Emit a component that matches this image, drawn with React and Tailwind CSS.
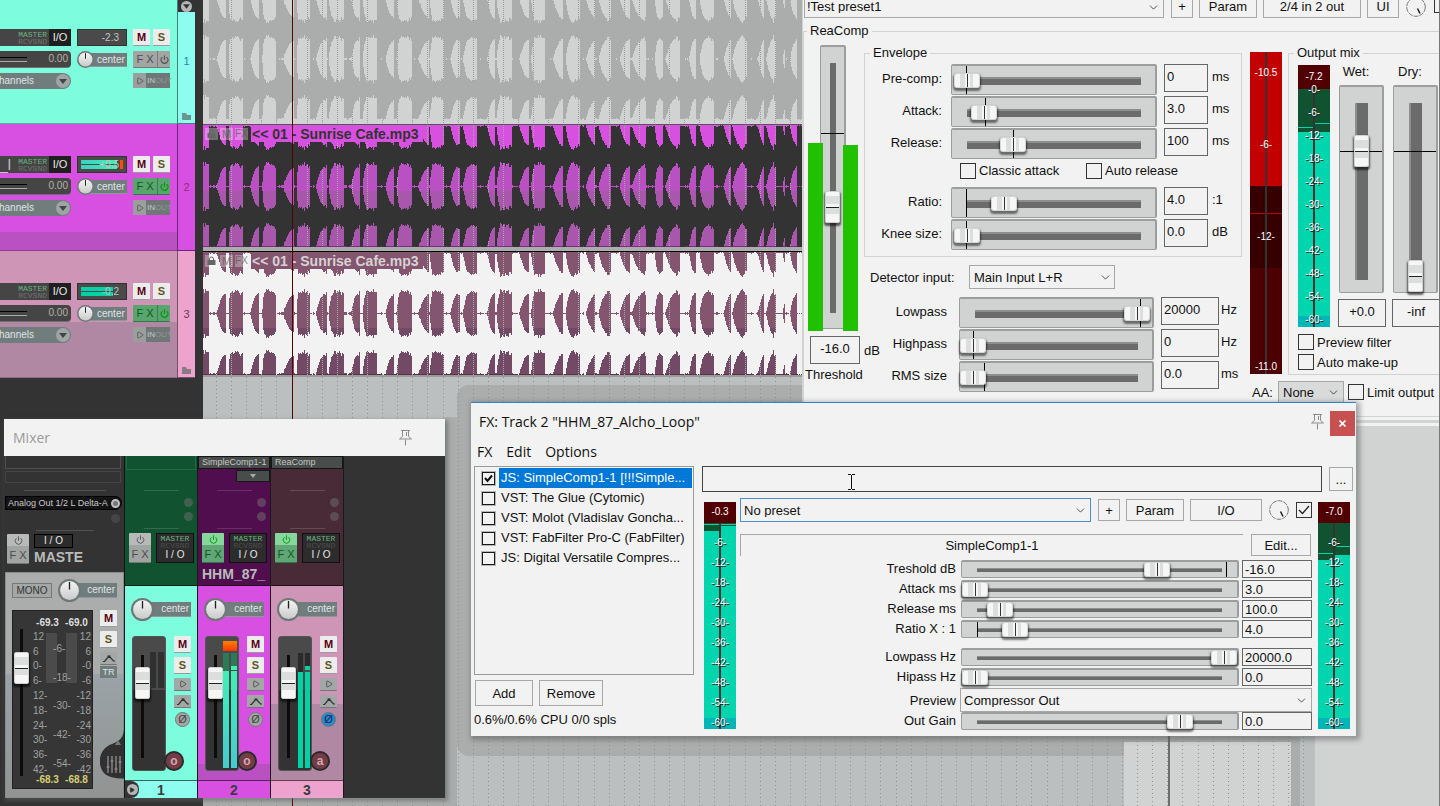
import React from "react";
import { Power, Play, ChevronDown } from "lucide-react";

/* ---------- shared control styles ---------- */

const H_RANGE =
  "relative z-10 m-0 block h-full w-full cursor-pointer appearance-none bg-transparent outline-none [&::-webkit-slider-thumb]:appearance-none [&::-webkit-slider-thumb]:h-[15px] [&::-webkit-slider-thumb]:w-[26px] [&::-webkit-slider-thumb]:rounded-[3px] [&::-webkit-slider-thumb]:border [&::-webkit-slider-thumb]:border-[#d4d6d5] [&::-webkit-slider-thumb]:shadow-[0_2px_2px_1px_rgba(0,0,0,0.5)] [&::-webkit-slider-thumb]:bg-[linear-gradient(90deg,#f6f6f6_5px,#dcdedd_5px,#dcdedd_10px,#f6f6f6_10px,#f6f6f6_12px,#333_12px,#333_13px,#f6f6f6_13px,#f6f6f6_15px,#dcdedd_15px,#dcdedd_18px,#f6f6f6_18px)]";

const V_RANGE =
  "relative z-10 m-0 block h-full w-4 cursor-pointer appearance-none bg-transparent outline-none [writing-mode:vertical-lr] [direction:rtl] [&::-webkit-slider-thumb]:appearance-none [&::-webkit-slider-thumb]:h-[32px] [&::-webkit-slider-thumb]:w-[15px] [&::-webkit-slider-thumb]:rounded-[2px] [&::-webkit-slider-thumb]:border [&::-webkit-slider-thumb]:border-[#d0d2d1] [&::-webkit-slider-thumb]:shadow-[0_2px_2px_1px_rgba(0,0,0,0.6)] [&::-webkit-slider-thumb]:bg-[linear-gradient(180deg,#f6f6f6_4px,#dcdedd_4px,#dcdedd_12px,#f6f6f6_12px,#f6f6f6_15px,#222_15px,#222_16px,#dcdedd_16px,#dcdedd_22px,#f6f6f6_22px)]";

const BTN =
  "flex items-center justify-center border border-[#a6a8a7] bg-[#f2f2f2] text-[#111]";

const CHECK =
  "m-0 h-4 w-4 shrink-0 appearance-none border border-[#333] bg-[#f2f2f2]";

/* ---------- waveform data ---------- */

// [start, hold, decay] of every transient, in thirds of a pixel
const HITS = [
  [25, 25, 26], [78, 7, 4], [127, 23, 26], [177, 8, 8], [228, 20, 38],
  [280, 8, 6], [330, 16, 30], [380, 4, 16], [430, 22, 22], [480, 7, 10],
  [530, 25, 30], [580, 8, 10], [635, 20, 34], [685, 3, 8], [730, 20, 24],
  [780, 7, 20], [830, 30, 24], [885, 3, 12], [935, 22, 30], [985, 7, 10],
  [1033, 25, 30], [1087, 9, 14], [1138, 18, 34], [1185, 10, 26],
  [1233, 25, 30], [1288, 7, 34], [1338, 24, 14], [1388, 7, 32],
  [1440, 26, 18], [1488, 9, 20], [1540, 30, 26], [1592, 4, 22],
  [1640, 32, 24], [1690, 7, 22], [1728, 18, 24], [1755, 13, 24],
  [1790, 18, 22], [1838, 20, 30],
];

const WAVE_WIDTH = 620;

function amplitude(x) {
  const t = (x + 3) * 3;
  const noise = Math.abs(Math.sin(x * 12.9898) * 43758.5453) % 1;
  let a = 0.2 + noise * 0.12;
  HITS.forEach(([s, hold, decay], i) => {
    if (t >= s && t < s + hold) a = Math.max(a, 0.94 + noise * 0.05);
    else if (t >= s + hold && t < s + hold + decay) {
      const k = 1 - (t - s - hold) / decay;
      a = Math.max(a, 0.3 + 0.62 * k * k + noise * 0.06);
    }
    const next = HITS[i + 1];
    if (next && t > next[0] - 9 && t < next[0]) a = Math.max(a, 0.26 + noise * 0.14);
  });
  return a;
}

function wavePath(center, height) {
  let up = "";
  let down = "";
  for (let x = 0; x < WAVE_WIDTH; x++) {
    const h = amplitude(x) * height;
    up += `L${x} ${center - h}L${x + 1} ${center - h}`;
    const r = WAVE_WIDTH - 1 - x;
    const g = amplitude(r) * height;
    down += `L${r + 1} ${center + g}L${r} ${center + g}`;
  }
  return `M0 ${center}${up}${down}Z`;
}

const GRID = Array.from({ length: 80 }, (_, i) => Math.round(13 + i * 15.1));

function Waveform({ height, bands, centers, amp, color, grid }) {
  return (
    <svg width={WAVE_WIDTH} height={height} className="block" shapeRendering="crispEdges" aria-hidden="true">
      {bands.map(([y, h, fill]) => (
        <rect key={y} x="0" y={y} width={WAVE_WIDTH} height={h} fill={fill} />
      ))}
      {GRID.filter((x) => x < WAVE_WIDTH).map((x) => (
        <line key={x} x1={x + 0.5} x2={x + 0.5} y1="0" y2={height} stroke={grid} strokeDasharray="1 1" />
      ))}
      {centers.map((c) => (
        <path key={c} d={wavePath(c, amp)} fill={color} />
      ))}
    </svg>
  );
}

/* ---------- small drawings ---------- */

function Pin() {
  return (
    <svg width="15" height="17" viewBox="0 0 15 17" fill="none" stroke="#8b8d8c" aria-hidden="true">
      <path d="M3 1.5h9M4.5 2v5.500M10.500 2v5.500M8.500 3v4M4.500 7.500L1.500 10h12l-3-2.500M7.500 10.500v6" />
    </svg>
  );
}

function Knob({ size, id }) {
  return (
    <svg width={size} height={size} viewBox="0 0 24 24" className="relative z-10 shrink-0" aria-hidden="true">
      <defs>
        <linearGradient id={id} x1="0" y1="0" x2="0" y2="1">
          <stop offset="0" stopColor="#f4f4f4" />
          <stop offset="1" stopColor="#c9cbca" />
        </linearGradient>
      </defs>
      <circle cx="12" cy="12" r="12" fill="#6e7877" />
      <circle cx="12" cy="12" r="9.800" fill={`url(#${id})`} />
      <path d="M12 3v8" stroke="#222" strokeWidth="1.400" />
    </svg>
  );
}

function DryKnob() {
  return (
    <svg width="20" height="20" viewBox="0 0 20 20" fill="none" className="shrink-0" aria-hidden="true">
      <circle cx="10" cy="10" r="9.300" stroke="#777" strokeDasharray="5 1" />
      <path d="M11.500 11.500l2.500 5" stroke="#111" strokeWidth="1.400" />
    </svg>
  );
}

function Envelope() {
  return (
    <svg width="12" height="8" viewBox="0 0 12 8" fill="none" stroke="#333" aria-hidden="true">
      <path d="M0 7.500h1.500L6 2l4.500 5H12M4.500 2h3" strokeWidth="1.200" />
    </svg>
  );
}

/* ---------- track control panel ---------- */

function MuteSolo() {
  return (
    <>
      <button className="flex h-[17px] w-[17px] items-center justify-center rounded-[1px] border-b border-[#9a9c9b] bg-[#ececec] text-[11px] font-bold text-[#560010]">M</button>
      <button className="flex h-[17px] w-[17px] items-center justify-center rounded-[1px] border-b border-[#9a9c9b] bg-[#ececec] text-[11px] font-bold text-[#5d5620]">S</button>
    </>
  );
}

function TrackPanel({ color, lower, lowerFrom, number, stripe, level, fx, folder, fragment, first }) {
  return (
    <div className={`flex ${first ? "h-[124px]" : "h-[127px]"}`}>
      <div className={`relative flex w-[177px] gap-[6px] border-b border-black/30 ${first ? "pt-[29px]" : "pt-[32px]"} ${color}`}>
        <div className={`absolute inset-x-0 bottom-0 ${lower} ${lowerFrom}`} />
        <div className="relative flex w-[71px] flex-col gap-[5px] text-[11px]">
          <div className="flex h-[17px] items-center justify-end bg-[#454545] text-[#c8c8c8]">
            <span className="mr-auto text-[14px] leading-none">{fragment}</span>
            <span className="flex flex-col font-[Liberation_Mono,monospace] text-[8px] leading-[7px]">
              <span className="text-[#6fae84]">MASTER</span>
              <span className="text-[#6f7170]">RCVSND</span>
            </span>
            <button className="ml-[2px] h-full w-[22px] bg-[#1f1f1f] text-[11px] text-[#e8e8e8]">I/O</button>
          </div>
          <div className="flex h-[17px] items-center rounded-r-sm border-b border-[#8a8c8b]/60 bg-[#454545] pr-[3px]">
            <div className="h-[5px] w-[27px] border-y border-[#ababab] border-t-black" />
            <span className="ml-auto text-[10px] text-[#b9b0a8]">0.00</span>
          </div>
          <button className="flex h-4 items-center justify-between rounded-r-full bg-[#717d7d] pr-px text-[10px] text-[#dfe6e6]">
            <span className="-ml-[6px]">channels</span>
            <span className="flex h-[14px] w-[14px] items-center justify-center rounded-full bg-[#9ea5a4]">
              <svg width="8" height="5" viewBox="0 0 8 5" aria-hidden="true"><path d="M0 0h8L4 5z" fill="#444" /></svg>
            </span>
          </button>
        </div>
        <div className="relative flex w-[50px] flex-col gap-[5px]">
          <div className="relative flex h-[17px] items-center justify-end border border-[#333] bg-[#4a4a4a] pr-[7px] text-[10px] text-[#c4c4c4]">
            {level.bar && (
              <div className="absolute inset-y-[3px] left-[3px] flex flex-col gap-px">
                <div className={`h-[4px] ${level.bar}`} />
                <div className={`h-[4px] ${level.bar}`} />
              </div>
            )}
            {level.clip && <div className="absolute inset-y-[3px] right-[3px] w-[3px] bg-[#ff4a00]" />}
            <span className="relative">{level.text}</span>
          </div>
          <div className="flex h-[17px] items-center">
            <Knob size={17} id={`pan-tcp-${number}`} />
            <span className="-ml-1 h-[14px] flex-1 border-b border-[#8d9998] bg-[#717d7d] pl-[7px] text-[10px] leading-[13px] text-[#dfe6e6]">center</span>
          </div>
        </div>
        <div className="relative flex w-[37px] flex-col gap-[5px]">
          <div className="flex justify-between"><MuteSolo /></div>
          <button className={`flex h-[17px] items-center rounded-[1px] border-b text-[11px] ${fx ? "border-[#2c7a44] bg-[#58a56e] text-[#0a5c22]" : "border-[#777] bg-[#a2a5a4] text-[#4c4e4d]"}`}>
            <span className="w-6 text-center">F X</span>
            <span className="flex h-full flex-1 items-center justify-center border-l border-black/25">
              <Power size={9} strokeWidth={3} className={fx ? "text-[#0c9410]" : "text-[#555]"} />
            </span>
          </button>
          <div className="flex h-[15px] items-center bg-[#6f7877] text-[8px] text-[#c6c8c7]">
            <button aria-label="Monitor input" className="flex h-full w-[13px] shrink-0 items-center justify-center bg-[#9a9e9d] text-[#444]"><Play size={8} /></button>
            <span className="pl-px">IN</span><span className="text-[#909796]">OUT</span>
          </div>
        </div>
      </div>
      <div className={`relative flex w-[18px] items-center justify-center border-b border-l border-black/50 text-[11px] ${stripe}`}>
        {number}
        {folder && (
          <svg width="9" height="7" viewBox="0 0 9 7" className="absolute bottom-[3px] left-1" aria-hidden="true">
            <path d="M0 0h4l1 2h4v5H0z" fill="#5c6a68" fillOpacity="0.7" />
          </svg>
        )}
      </div>
    </div>
  );
}

function TrackList() {
  return (
    <aside className="w-[203px] shrink-0 bg-[#333]">
      <div className="relative">
        <TrackPanel first color="bg-[#7dfddd]" lower="bg-[#80ffda]" lowerFrom="h-0" number="1" stripe="bg-[#8cfdef] text-[#2f83a8]" level={{ text: "-2.3" }} folder />
        <div className="absolute top-0 left-[178px] flex h-3 w-[17px] items-center justify-center bg-[#333]">
          <span className="flex h-[11px] w-[11px] items-center justify-center rounded-full bg-[#b5b7b6]">
            <svg width="7" height="5" viewBox="0 0 8 5" aria-hidden="true"><path d="M0 0h8L4 5z" fill="#333" /></svg>
          </span>
        </div>
      </div>
      <TrackPanel color="bg-[#d750e1]" lower="bg-[#b951c3]" lowerFrom="h-[18px]" number="2" stripe="bg-[#d750e1] text-[#8c2f76]" level={{ text: "+0.5", bar: "w-[36px] bg-linear-to-r from-[#3fcfc4] to-[#3ff0b4]", clip: true }} fx fragment="_l" />
      <TrackPanel color="bg-[#ce95b7]" lower="bg-[#b088a3]" lowerFrom="h-[55px]" number="3" stripe="bg-[#eda3cd] text-[#5f3f52]" level={{ text: "-0.2", bar: "w-[32px] bg-[#00d2a8]" }} fx folder />
    </aside>
  );
}

/* ---------- arrange view ---------- */

function ItemHeader({ bg, text }) {
  return (
    <div className="absolute top-0 left-0 flex h-[17px] items-center gap-[2px] pl-[2px]">
      <span className="flex h-3 w-[13px] items-center justify-center bg-white/30">
        <svg width="9" height="9" viewBox="0 0 9 9" aria-hidden="true">
          <path d="M0.500 4h8v5h-8z" fill="#666" />
          <path d="M2.500 4V3a2 2 0 0 1 4 0V4" fill="none" stroke="#666" />
        </svg>
      </span>
      <span className="h-3 w-[13px] bg-white/30 text-center text-[11px] leading-3 text-[#555]/70">M</span>
      <span className="h-3 w-[13px] bg-white/30 text-center text-[10px] leading-3 text-[#555]/70">FX</span>
      <span className={`ml-px h-[17px] pr-1 pl-px text-[14px] leading-[18px] font-bold ${bg} ${text}`}>&lt;&lt; 01 - Sunrise Cafe.mp3</span>
    </div>
  );
}

function Arrange() {
  return (
    <main className="relative flex-1 overflow-hidden bg-[#bbbfc0]">
      <Waveform height={124} bands={[[0, 124, "#d1d3d2"]]} centers={[29, 89]} amp={31} color="#abadac" grid="#9a9c9b" />
      <div className="relative border-t border-[#555]">
        <Waveform height={122} bands={[[0, 40, "#d850e0"], [40, 26, "#b951c3"], [66, 55, "#a957ad"], [121, 1, "#7d2a86"]]} centers={[31, 92]} amp={31} color="#333333" grid="#a3aba0" />
        <ItemHeader bg="bg-[#d850e0]" text="text-[#333]" />
      </div>
      <div className="h-1 bg-[#abadac]" />
      <div className="relative border-t border-black">
        <Waveform height={123} bands={[[0, 76, "#84556e"], [76, 46, "#734a66"], [122, 1, "#5e2f45"]]} centers={[31, 92]} amp={31} color="#f2f2f2" grid="#a8aaa9" />
        <ItemHeader bg="bg-[#84556e]" text="text-[#d6d2d4]" />
      </div>
      <svg className="h-[440px] w-full border-t-2 border-[#9a9c9b]" aria-hidden="true">
        <rect x="254" y="8" width="834" height="371" rx="12" fill="#abadac" />
        <rect x="0" y="422" width="254" height="20" fill="#abadac" />
        <rect x="242" y="40" width="12" height="400" fill="#abadac" />
        <rect x="921" y="365" width="167" height="80" fill="#d1d3d2" />
        <rect x="1088" y="360" width="9" height="80" fill="#abadac" />
        {GRID.map((x) => (
          <line key={x} x1={x + 0.5} x2={x + 0.5} y1="0" y2="440" stroke="#8f9190" strokeDasharray="1 3" shapeRendering="crispEdges" />
        ))}
        <rect x="965" y="340" width="2" height="100" fill="#6c6e6d" />
      </svg>
      <div className="absolute inset-y-0 left-[89px] w-px bg-[#5a0000]" />
    </main>
  );
}

/* ---------- level meter with a dB scale ---------- */

const SCALE = ["-6-", "-12-", "-18-", "-24-", "-30-", "-36-", "-42-", "-48-", "-54-", "-60-"];

function ScaleMeter({ value, valueClass, scale, stepClass, padClass, left, right, leftPeak, rightPeak }) {
  return (
    <div className="flex w-8 flex-col text-center text-[10px] text-white">
      <div className={`bg-[#500000] ${valueClass}`}>{value}</div>
      <div className={`relative bg-[#115231] ${padClass}`}>
        <div className={`absolute bottom-0 left-0 w-4 bg-[#00d5ae] ${left}`} />
        <div className={`absolute right-0 bottom-0 w-4 bg-[#00d5ae] ${right}`} />
        <div className={`absolute left-0 h-px w-4 bg-[#00d5ae] ${leftPeak}`} />
        <div className={`absolute right-0 h-px w-4 bg-[#00d5ae] ${rightPeak}`} />
        <div className="absolute inset-x-0 bottom-0 h-[11px] bg-[#00b6b6]" />
        <div className="absolute inset-y-0 left-[15px] w-[2px] bg-[#333]" />
        <ul className="relative [text-shadow:1px_1px_0_#222]">
          {scale.map((s) => (
            <li key={s} className={stepClass}>{s}</li>
          ))}
        </ul>
      </div>
    </div>
  );
}

/* ---------- ReaComp window ---------- */

const TRACK_BOX = "relative rounded-[2px] border border-t-2 border-r-2 border-[#9c9e9d] bg-[#d1d3d2]";

function CompRow({ id, label, value, tick, text, unit, wide }) {
  return (
    <div className="flex h-8">
      <label htmlFor={id} className={`text-right leading-[30px] ${wide ? "w-[83px]" : "w-[77px]"}`}>{label}</label>
      <div className={`${TRACK_BOX} h-[31px] ${wide ? "ml-[12px] w-[195px]" : "ml-[9px] w-[206px]"}`}>
        <div className="absolute top-[11px] right-[14px] left-[15px] h-2 border-t-2 border-[#8d8f8e] bg-[#6b6b6b]" />
        <div className={`absolute inset-y-0 w-px bg-black ${tick}`} />
        <input id={id} type="range" min="0" max="100" defaultValue={value} className={H_RANGE} />
      </div>
      <input type="text" aria-label={`${label} value`} defaultValue={text} className={`ml-[7px] h-7 border border-[#666] bg-[#f2f2f2] px-[2px] pb-1 text-[13px] ${wide ? "w-[58px]" : "w-[44px]"}`} />
      <span className={`leading-[26px] ${wide ? "ml-[2px]" : "ml-1"}`}>{unit}</span>
    </div>
  );
}

function MixFader({ id, label, value, text }) {
  return (
    <div className="flex w-[48px] shrink-0 flex-col">
      <label htmlFor={id} className="h-[22px] pr-3 text-center leading-[18px]">{label}</label>
      <div className={`${TRACK_BOX} ml-px flex h-[208px] w-[45px] justify-center`}>
        <div className="absolute top-4 bottom-3 left-[15px] w-[13px] bg-[#6b6b6b] shadow-[inset_2px_0_0_#8d8f8e]" />
        <div className="absolute inset-x-0 top-[64px] h-px bg-black" />
        <input id={id} type="range" min="0" max="100" defaultValue={value} className={V_RANGE} />
      </div>
      <input type="text" aria-label={`${label} dB`} defaultValue={text} className="mt-[6px] h-7 w-[48px] border border-[#666] bg-[#f2f2f2] pb-1 text-center text-[13px]" />
    </div>
  );
}

function ReaCompWindow() {
  return (
    <section className="absolute top-0 right-0 left-[802px] h-[426px] overflow-hidden border-r border-l border-r-[#777] border-l-[#d1d3d2] bg-[#f2f2f2] text-[13px] text-[#111]">
      <div className="-mt-[5px] flex h-[23px] items-stretch pl-px">
        <div className="relative w-[360px] shrink-0">
          <select aria-label="Preset" className="h-full w-full appearance-none border border-[#a6a8a7] bg-[#f2f2f2] px-[2px]">
            <option>!Test preset1</option>
          </select>
          <ChevronDown size={13} strokeWidth={1.300} className="absolute top-[6px] right-1" />
        </div>
        <button className={`${BTN} ml-[7px] w-[22px] shrink-0`}>+</button>
        <button className={`${BTN} ml-[6px] w-[58px] shrink-0`}>Param</button>
        <button className={`${BTN} ml-[6px] w-[98px] shrink-0`}>2/4 in 2 out</button>
        <button className={`${BTN} ml-[6px] w-[32px] shrink-0`}>UI</button>
        <span className="ml-[7px] flex shrink-0 items-center"><DryKnob /></span>
        <input type="checkbox" aria-label="Enabled" defaultChecked className={`${CHECK} mt-[2px] ml-[8px]`} />
      </div>
      <fieldset className="mt-[3px] min-w-0 border-t border-l border-[#d1d3d2]">
        <legend className="ml-[3px] px-[3px] leading-[20px]">ReaComp</legend>
        <div className="flex w-[680px] items-start">
          <div className="w-[60px] pt-[2px]">
            <div className="ml-1 flex h-[288px] w-[50px] items-end">
              <div className="z-20 mr-[-3px] h-[188px] w-[15px] bg-[#21c100]" />
              <div className={`${TRACK_BOX} mb-[2px] flex h-[284px] w-[26px] justify-center`}>
                <div className="absolute top-4 bottom-[15px] left-[9px] w-[6px] bg-[#6b6b6b]" />
                <div className="absolute inset-x-0 top-[86px] h-px bg-black" />
                <input type="range" aria-label="Threshold" min="0" max="100" defaultValue="42" className={V_RANGE} />
              </div>
              <div className="z-20 ml-[-3px] h-[186px] w-[15px] bg-[#21c100]" />
            </div>
            <div className="mt-[5px] flex items-end">
              <input id="thr" type="text" defaultValue="-16.0" className="ml-[6px] h-7 w-[50px] shrink-0 border border-[#666] bg-[#f2f2f2] pb-1 text-center" />
              <span className="ml-1 leading-[26px]">dB</span>
            </div>
            <label htmlFor="thr" className="ml-px leading-[22px]">Threshold</label>
          </div>
          <div className="w-[380px]">
            <fieldset className="mt-[2px] w-[378px] border border-[#d1d3d2] pt-px pb-[5px]">
              <legend className="ml-[5px] px-[3px] leading-[20px]">Envelope</legend>
              <CompRow id="pre" label="Pre-comp:" value="1" tick="left-[14px]" text="0" unit="ms" />
              <CompRow id="att" label="Attack:" value="11" tick="left-[33px]" text="3.0" unit="ms" />
              <CompRow id="rel" label="Release:" value="27" tick="left-[61px]" text="100" unit="ms" />
              <div className="flex h-[27px] items-center pb-[6px] pl-[95px]">
                <label className="flex w-[126px] items-center gap-[3px]"><input type="checkbox" className={CHECK} />Classic attack</label>
                <label className="flex items-center gap-[3px]"><input type="checkbox" className={CHECK} />Auto release</label>
              </div>
              <CompRow id="rat" label="Ratio:" value="22" tick="left-[14px]" text="4.0" unit=":1" />
              <CompRow id="kne" label="Knee size:" value="1" tick="left-[14px]" text="0.0" unit="dB" />
            </fieldset>
            <div className="flex h-[40px] items-center pl-[6px]">
              <label htmlFor="det" className="w-[99px]">Detector input:</label>
              <div className="relative h-[24px] w-[146px]">
                <select id="det" className="h-full w-full appearance-none border border-[#a6a8a7] bg-[#f2f2f2] px-1"><option>Main Input L+R</option></select>
                <ChevronDown size={13} strokeWidth={1.300} className="absolute top-[6px] right-[3px]" />
              </div>
            </div>
            <CompRow wide id="low" label="Lowpass" value="99" tick="left-[180px]" text="20000" unit="Hz" />
            <CompRow wide id="hig" label="Highpass" value="0" tick="left-[13px]" text="0" unit="Hz" />
            <CompRow wide id="rms" label="RMS size" value="0" tick="left-[24px]" text="0.0" unit="ms" />
          </div>
          <div>
            <div className="flex">
              <div className="relative mt-[11px] ml-2 flex h-[322px] w-8 flex-col items-center bg-[#4c0000] text-[10px] leading-[14px] text-white">
                <div className="absolute inset-x-0 top-0 h-[134px] bg-[#c20000]" />
                <div className="absolute inset-x-0 top-[134px] h-[82px] bg-[#360000]" />
                <div className="absolute inset-x-0 top-[161px] h-px bg-[#c20000]" />
                <div className="absolute inset-y-0 left-[15px] w-[2px] bg-[#333]" />
                <span className="relative mt-[14px]">-10.5</span>
                <span className="relative mt-[58px]">-6-</span>
                <span className="relative mt-[78px]">-12-</span>
                <span className="relative mt-auto">-11.0</span>
              </div>
              <fieldset className="mt-[2px] ml-[6px] w-[200px] border border-[#d1d3d2]">
                <legend className="ml-[5px] px-[3px] leading-[20px]">Output mix</legend>
                <div className="flex h-[265px] pl-[9px]">
                  <div className="pt-[2px]">
                    <ScaleMeter value="-7.2" valueClass="h-[24px] leading-[23px]" scale={["-0-", ...SCALE]} stepClass="h-[23px] leading-[1px]" padClass="h-[238px]" left="h-[195px]" right="h-[195px]" leftPeak="top-[38px]" rightPeak="top-[34px]" />
                  </div>
                  <div className="ml-2 flex gap-[6px]">
                    <MixFader id="wet" label="Wet:" value="72" text="+0.0" />
                    <MixFader id="dry" label="Dry:" value="0" text="-inf" />
                  </div>
                </div>
                <label className="mt-1 ml-[9px] flex h-5 items-center gap-[3px]"><input type="checkbox" className={CHECK} />Preview filter</label>
                <label className="mb-[2px] ml-[9px] flex h-5 items-center gap-[3px]"><input type="checkbox" className={CHECK} />Auto make-up</label>
              </fieldset>
            </div>
            <div className="mt-[6px] ml-[10px] flex h-[22px] items-center">
              <label htmlFor="aa" className="w-[26px]">AA:</label>
              <div className="relative h-[22px] w-[66px]">
                <select id="aa" className="h-full w-full appearance-none border border-[#a6a8a7] bg-[#d9dbda] px-1"><option>None</option></select>
                <ChevronDown size={13} strokeWidth={1.300} className="absolute top-[5px] right-1" />
              </div>
              <label className="ml-1 flex items-center gap-[3px]"><input type="checkbox" className={CHECK} />Limit output</label>
            </div>
          </div>
        </div>
      </fieldset>
      <div className="absolute inset-x-0 top-[416px] h-px bg-[#d1d3d2]" />
      <div className="absolute inset-x-0 top-[420px] h-[3px] bg-[#d1d3d2]" />
    </section>
  );
}

/* ---------- FX window ---------- */

function FxRow({ id, label, value, text, tick }) {
  return (
    <div className="flex h-5 items-start">
      <label htmlFor={id} className="w-[216px] text-right leading-[18px]">{label}</label>
      <div className={`${TRACK_BOX} ml-[5px] h-[18px] min-w-0 flex-1`}>
        <div className="absolute top-[6px] right-[15px] left-[15px] h-[4px] border-t border-[#8d8f8e] bg-[#6b6b6b]" />
        {tick && <div className={`absolute inset-y-0 w-px bg-black ${tick}`} />}
        <input id={id} type="range" min="0" max="100" step="0.5" defaultValue={value} className={H_RANGE} />
      </div>
      <input type="text" aria-label={`${label} value`} defaultValue={text} className="ml-[3px] h-[18px] w-[70px] border border-[#666] bg-[#f2f2f2] px-[2px]" />
    </div>
  );
}

const PLUGINS = [
  "JS: SimpleComp1-1 [!!!Simple...",
  "VST: The Glue (Cytomic)",
  "VST: Molot (Vladislav Goncha...",
  "VST: FabFilter Pro-C (FabFilter)",
  "JS: Digital Versatile Compres...",
];

function FxCheck({ checked }) {
  return (
    <span className="relative flex h-[13px] w-[13px] shrink-0">
      <input type="checkbox" aria-label="Enable plug-in" defaultChecked={checked} className="m-0 h-[13px] w-[13px] appearance-none border border-[#1a1a1a] bg-[#f2f2f2] outline outline-[#b5b7b6]" />
      {checked && (
        <svg width="13" height="13" viewBox="0 0 13 13" fill="none" className="absolute top-0 left-0" aria-hidden="true">
          <path d="M3 6l2.500 3L10 3.500" stroke="#111" strokeWidth="2" />
        </svg>
      )}
    </span>
  );
}

function FxWindow() {
  return (
    <section className="absolute top-[402px] left-[471px] w-[885px] border-t border-[#2a86c8] bg-[#f2f2f2] text-[13px] text-[#111] shadow-[2px_2px_5px_2px_rgba(70,75,75,0.45)]">
      <header className="flex h-[37px] items-center pl-2 font-['Open_Sans','Noto_Sans',sans-serif] text-[14px]">
        <h2 className="flex-1">FX: Track 2 "HHM_87_Alcho_Loop"</h2>
        <Pin />
        <button aria-label="Close" className="mt-1 mr-px ml-[5px] flex h-[25px] w-[25px] items-center justify-center bg-[#c75050]">
          <svg width="7" height="7" viewBox="0 0 7 7" stroke="#fff" strokeWidth="1.600" aria-hidden="true"><path d="M0.500 0.500l6 6M6.500 0.500l-6 6" /></svg>
        </button>
      </header>
      <nav className="flex h-[24px] items-center gap-[14px] pl-[6px] font-['Open_Sans','Noto_Sans',sans-serif] text-[14px]">
        <button>FX</button><button>Edit</button><button>Options</button>
      </nav>
      <div className="flex pt-[2px] pb-1">
        <div className="w-[220px] shrink-0 pl-[3px]">
          <ul className="h-[209px] w-[220px] border border-[#999b9a] pt-px">
            {PLUGINS.map((p, i) => (
              <li key={p} className="flex h-5 items-center gap-1 pl-[7px]">
                <FxCheck checked={i === 0} />
                <span className={`mr-px h-5 flex-1 overflow-hidden pl-[2px] leading-5 whitespace-nowrap ${i === 0 ? "bg-[#0078d7] text-white" : ""}`}>{p}</span>
              </li>
            ))}
          </ul>
          <div className="mt-[5px] ml-px flex gap-[6px]">
            <button className={`${BTN} h-[26px] w-[58px]`}>Add</button>
            <button className={`${BTN} h-[26px] w-16`}>Remove</button>
          </div>
          <p className="pt-1 leading-[20px]">0.6%/0.6% CPU 0/0 spls</p>
        </div>
        <div className="ml-[11px] min-w-0 flex-1">
          <div className="flex items-center">
            <div className="relative flex-1">
              <input type="text" aria-label="Comment" className="block h-[26px] w-full border border-[#444] bg-[#f2f2f2]" />
              <svg width="7" height="16" viewBox="0 0 7 16" fill="none" stroke="#111" className="absolute top-[8px] left-[146px]" shapeRendering="crispEdges" aria-hidden="true">
                <path d="M0 .5h3M4 .5h3M3.500 1v14M0 15.500h3M4 15.500h3" />
              </svg>
            </div>
            <button className={`${BTN} mr-[3px] ml-[7px] h-6 w-6`}>...</button>
          </div>
          <div className="flex gap-1 pt-[6px] pr-[6px] pl-[2px]">
            <div className="pt-1">
              <ScaleMeter value="-0.3" valueClass="h-[21px] leading-[20px]" scale={SCALE} stepClass="h-5 leading-[14px]" padClass="h-[206px] pt-[13px] overflow-hidden" left="h-[198px]" right="h-[203px]" leftPeak="top-px" rightPeak="top-px" />
            </div>
            <div className="min-w-0 flex-1">
              <div className="flex h-[24px] items-center">
                <div className="relative h-[24px] min-w-0 flex-1">
                  <select aria-label="FX preset" className="h-full w-full appearance-none border border-[#4d8fc9] bg-[#f2f2f2] px-[3px]"><option>No preset</option></select>
                  <ChevronDown size={13} strokeWidth={1.300} className="absolute top-[6px] right-1" />
                </div>
                <button className={`${BTN} ml-[7px] h-[22px] w-[22px]`}>+</button>
                <button className={`${BTN} ml-[6px] h-[22px] w-[58px]`}>Param</button>
                <button className={`${BTN} ml-[6px] h-[22px] w-[72px]`}>I/O</button>
                <span className="mx-[7px] flex"><DryKnob /></span>
                <span className="relative flex">
                  <input type="checkbox" aria-label="Bypass" defaultChecked className={CHECK} />
                  <svg width="16" height="16" viewBox="0 0 16 16" fill="none" className="absolute top-0 left-0" aria-hidden="true">
                    <path d="M3 8l3.500 3.500L13 4" stroke="#222" strokeWidth="1.300" />
                  </svg>
                </span>
              </div>
              <div className="mt-[12px] flex h-[26px] items-start">
                <div className="h-[22px] flex-1 border-t border-l border-[#a6a8a7] text-center leading-[22px]">SimpleComp1-1</div>
                <button className={`${BTN} mr-px ml-2 h-[22px] w-[60px]`}>Edit...</button>
              </div>
              <FxRow id="tr" label="Treshold dB" value="73" text="-16.0" tick="left-[264px]" />
              <FxRow id="at" label="Attack ms" value="0" text="3.0" />
              <FxRow id="re" label="Release ms" value="10" text="100.0" />
              <FxRow id="ra" label="Ratio X : 1" value="16" text="4.0" tick="left-[15px]" />
              <div className="h-2" />
              <FxRow id="lp" label="Lowpass Hz" value="100" text="20000.0" />
              <FxRow id="hp" label="Hipass Hz" value="0" text="0.0" />
              <div className="flex h-6 items-center">
                <label htmlFor="pv" className="w-[216px] text-right">Preview</label>
                <div className="relative ml-1 h-[24px] flex-1">
                  <select id="pv" className="h-full w-full appearance-none border border-[#a6a8a7] bg-[#f2f2f2] px-[3px]"><option>Compressor Out</option></select>
                  <ChevronDown size={13} strokeWidth={1.300} className="absolute top-[6px] right-1" />
                </div>
              </div>
              <FxRow id="og" label="Out Gain" value="82.5" text="0.0" />
            </div>
            <div className="pt-1 pl-[2px]">
              <ScaleMeter value="-7.0" valueClass="h-[21px] leading-[20px]" scale={SCALE} stepClass="h-5 leading-[14px]" padClass="h-[206px] pt-[13px] overflow-hidden" left="h-[169px]" right="h-[174px]" leftPeak="top-[30px]" rightPeak="top-[23px]" />
            </div>
          </div>
        </div>
      </div>
    </section>
  );
}

/* ---------- mixer window ---------- */

function FxStack({ on }) {
  return (
    <button className={`flex h-[30px] w-[22px] flex-col items-center justify-between rounded-[1px] border-b py-[2px] text-[11px] leading-3 ${on ? "border-[#2c7a44] bg-linear-to-b from-[#86d79c] from-40% to-[#62a576] to-40% text-[#0a5c22]" : "border-[#777] bg-linear-to-b from-[#b7bab9] from-40% to-[#a0a4a3] to-40% text-[#4c4e4d]"}`}>
      <Power size={9} strokeWidth={2.500} className={on ? "text-[#0c9410]" : "text-[#555]"} />
      <span>F X</span>
    </button>
  );
}

function PanRow({ id }) {
  return (
    <div className="flex items-center">
      <Knob size={23} id={id} />
      <span className="-ml-1 h-[15px] flex-1 border-b border-[#8d9998] bg-[#717d7d] pr-[2px] text-right text-[10px] leading-[14px] text-[#dfe6e6]">center</span>
    </div>
  );
}

const SMALL = "flex h-[13px] w-[17px] items-center justify-center rounded-[1px] border-b border-[#777] bg-[#a3a7a6] text-[#333]";

function Strip({ top, slots, title, panel, lower, lowerH, foot, number, fx, phase, arm, meter, folder }) {
  return (
    <div className="flex w-[73px] flex-col border-r border-black/50">
      <div className={`flex h-[130px] flex-col border-b border-black/60 ${top}`}>
        <div className="h-[34px]">{slots}</div>
        <div className="mx-auto h-[3px] w-[35px] border-t border-white/15" />
        <div className="flex flex-col items-end gap-[5px] pt-[5px] pr-1">
          <span className="h-[9px] w-[9px] rounded-full bg-[#6f6f6f]/50" />
          <span className="h-[9px] w-[9px] rounded-full bg-[#6f6f6f]/50" />
        </div>
        <div className="mx-auto mt-[7px] h-[5px] w-[35px] border-t border-white/15" />
        <div className="flex justify-between pr-[3px] pl-1">
          <FxStack on={fx} />
          <div className="flex w-[38px] flex-col items-center border border-black/60 bg-[#2c2c2c] pt-px">
            <span className="font-[Liberation_Mono,monospace] text-[8px] leading-[7px] text-[#6fae84]">MASTER</span>
            <span className="font-[Liberation_Mono,monospace] text-[8px] leading-[7px] text-[#4c4e4d]">RCVSND</span>
            <button className="text-[10px] leading-3 text-[#e8e8e8]">I / O</button>
          </div>
        </div>
        <div className="pl-1 text-[14px] leading-[22px] font-bold whitespace-nowrap text-[#b9bbba]">{title}</div>
      </div>
      <div className={`relative h-[194px] px-[6px] pt-3 ${panel}`}>
        <div className={`absolute inset-x-0 bottom-0 ${lower} ${lowerH}`} />
        <div className="relative"><PanRow id={`pan-mix-${number}`} /></div>
        <div className="relative mt-[15px] flex justify-between pl-px">
          <div className="relative flex h-[135px] w-[34px] rounded-[3px] border border-[#555] bg-linear-to-b from-[#4a4a4a] from-40% to-[#333] to-40% py-[3px]">
            <div className="absolute top-[18px] bottom-[12px] left-[8px] w-[3px] bg-[#0c0c0c]" />
            <input type="range" aria-label={`Volume ${number}`} min="0" max="100" defaultValue="72" className={`${V_RANGE} ml-px`} />
            <div className="absolute right-px bottom-[2px] z-20 flex gap-[2px]">{meter}</div>
          </div>
          <div className="flex flex-col items-center gap-1">
            <MuteSolo />
            <button aria-label="Monitor" className={SMALL}><Play size={8} /></button>
            <button aria-label="Envelopes" className={SMALL}><Envelope /></button>
            <button aria-label="Phase" className={`flex h-[15px] w-[15px] items-center justify-center rounded-full border border-[#6f7877] text-[11px] leading-none ${phase ? "bg-[#2f86c9] text-[#0d2f66]" : "bg-[#a3a7a6] text-[#444]"}`}>Ø</button>
          </div>
          <button aria-label="Record arm" className="absolute bottom-0 left-[33px] z-20 flex h-5 w-5 items-center justify-center rounded-full border-2 border-[#2a2a2a] bg-[#743c46] text-[12px] leading-none font-bold text-[#d3a9b0]">{arm}</button>
        </div>
      </div>
      <div className={`flex h-[18px] items-center border-t border-black/60 text-[14px] font-bold text-[#3c3c3c] ${foot}`}>
        {folder && (
          <span className="flex h-full w-[14px] items-center justify-center rounded-r-lg bg-[#333]">
            <span className="flex h-[11px] w-[11px] items-center justify-center rounded-full bg-[#b5b7b6] text-[#333]">
              <Play size={6} fill="currentColor" />
            </span>
          </span>
        )}
        <span className={`flex-1 text-center ${folder ? "pr-[14px]" : ""}`}>{number}</span>
      </div>
    </div>
  );
}

const LEFT_DB = ["12", "6", "0-", "6-", "12-", "18-", "24-", "30-", "36-", "42-"];
const MID_DB = ["-6-", "-18-", "-30-", "-42-", "-54-"];
const RIGHT_DB = ["12", "6", "-0", "-6", "-12", "-18", "-24", "-30", "-36", "-42"];

function Master() {
  return (
    <div className="flex w-[121px] flex-col border-r border-black/60 pl-px">
      <div className="flex h-[116px] flex-col">
        <div className="mr-[3px] h-[13px] border-x border-b border-[#505050]" />
        <div className="mt-[2px] mr-[3px] h-3 border border-[#454545]" />
        <div className="mx-auto mt-[7px] h-[6px] w-[82px] border-t border-[#505050]" />
        <div className="mr-[2px] flex h-[14px] items-center justify-between rounded-r-full border border-black bg-[#141414] pr-px pl-[2px] text-[9px] whitespace-nowrap text-[#c9c9c9]">
          <span>Analog Out 1/2 L Delta-A</span>
          <span className="h-[9px] w-[9px] rounded-full border-2 border-[#c0c0c0] bg-[#777]" />
        </div>
        <span className="mt-[4px] mr-[4px] h-[9px] w-[9px] self-end rounded-full bg-[#454545]" />
        <div className="mx-auto mt-[7px] h-[4px] w-[58px] border-t border-[#505050]" />
        <div className="flex gap-[5px] pl-[2px]">
          <FxStack />
          <div>
            <button className="flex h-[14px] w-[39px] items-center justify-center border border-black bg-[#2c2c2c] text-[10px] text-[#e8e8e8]">I / O</button>
            <div className="w-[56px] text-[14px] leading-[19px] font-bold text-[#b9bbba]">MASTE</div>
          </div>
        </div>
      </div>
      <div className="relative h-[226px] border border-[#8a8c8b] bg-linear-to-b from-[#abadac] from-45% via-[#9aa3a7] via-45% to-[#929493] px-[6px] pt-[6px]">
        <div className="flex items-center justify-between">
          <button className="h-[15px] w-[40px] border border-[#777] bg-[#a3a7a6] text-[10px] leading-3 text-[#333]">MONO</button>
          <div className="w-[59px]"><PanRow id="pan-master" /></div>
        </div>
        <div className="mt-2 flex justify-between">
          <div className="relative flex h-[179px] w-[81px] border border-[#222] bg-[#363636] pt-1 pb-[3px]">
            <div className="absolute top-[18px] bottom-[12px] left-[7px] w-[3px] bg-[#0c0c0c]" />
            <input type="range" aria-label="Master volume" min="0" max="100" defaultValue="73" className={V_RANGE} />
            <div className="flex flex-1 flex-col pr-px pl-[4px] text-[10px] leading-3 font-bold">
              <div className="flex h-[16px] items-center justify-around text-[#dedede]"><span>-69.3</span><span>-69.0</span></div>
              <div className="relative flex h-[147px] justify-between font-normal text-[#a0a2a1]">
                <div className="absolute top-[2px] left-[13px] h-[50px] w-[11px] bg-[#4b4b4b]" />
                <div className="absolute top-[2px] right-[14px] h-[50px] w-[11px] bg-[#4b4b4b]" />
                <ul className="relative flex flex-col justify-between">{LEFT_DB.map((d) => <li key={d}>{d}</li>)}</ul>
                <ul className="relative flex flex-col justify-between pt-[12px] pb-[6px]">{MID_DB.map((d) => <li key={d}>{d}</li>)}</ul>
                <ul className="relative flex flex-col justify-between text-right">{RIGHT_DB.map((d) => <li key={d}>{d}</li>)}</ul>
              </div>
              <div className="-mt-px flex justify-around leading-[10px] text-[#d6cf74]"><span>-68.3</span><span>-68.8</span></div>
            </div>
          </div>
          <div className="flex flex-col gap-1">
            <MuteSolo />
            <div>
              <button aria-label="Master envelopes" className={SMALL}><Envelope /></button>
              <button className="mt-px flex h-3 w-[17px] items-center justify-center bg-[#717d7d] text-[9px] text-[#dfe6e6]">TR</button>
            </div>
          </div>
        </div>
        <svg width="24" height="52" viewBox="0 0 24 52" className="absolute right-[-1px] bottom-[18px]" aria-hidden="true">
          <path d="M24 0C24 10 20 14 12 17C-2 22 -3 38 4 46C8 50 14 51.500 24 51.500Z" fill="#303030" />
          <path d="M8 29v17M12 29v17M16 29v17M20 29v17M6.500 40h3M10.500 34h3M14.500 42h3M18.500 35h3" stroke="#999" strokeWidth="1.200" />
          <path d="M15 18l3-5 3 5z" fill="#777" />
        </svg>
      </div>
    </div>
  );
}

function Slot({ children }) {
  return <div className="flex h-[13px] items-center border border-black/70 bg-[#484c4b] pl-[3px] text-[9px] whitespace-nowrap text-[#c4c6c5]">{children}</div>;
}

function MixerWindow() {
  return (
    <section className="absolute top-[419px] left-1 w-[441px] bg-[#333] shadow-[2px_2px_4px_1px_rgba(90,95,95,0.6)]">
      <header className="flex h-[37px] items-center justify-between bg-[#f2f2f2] pr-8 pl-[9px] font-['Open_Sans','Noto_Sans',sans-serif] text-[14px] text-[#9a9a9a]">
        <h2>Mixer</h2>
        <Pin />
      </header>
      <div className="flex">
        <Master />
        <Strip
          top="bg-[#115231]" panel="bg-[#7dfddd]" lower="bg-[#7dfddd]" lowerH="h-0" foot="bg-[#8cfdef]" number="1" arm="o" folder
          slots={<div className="mx-px h-[14px] border-x border-b border-[#1c6b42]" />}
          meter={<><div className="mb-[80px] h-[36px] w-[6px] bg-[#303030]" /><div className="h-[36px] w-[6px] bg-[#303030]" /></>}
        />
        <Strip
          top="bg-[#500e4f]" panel="bg-[#d750e1]" lower="bg-[#b951c3]" lowerH="h-4" foot="bg-[#d750e1]" number="2" fx title="HHM_87_" arm="o"
          slots={<><Slot>SimpleComp1-1</Slot><div className="mt-px ml-auto flex h-3 w-[34px] items-center justify-center border border-black/70 bg-[#484c4b]"><svg width="6" height="4" viewBox="0 0 6 4" aria-hidden="true"><path d="M0 0h6L3 4z" fill="#aaa" /></svg></div></>}
          meter={<>
            <div className="flex h-[127px] w-[6px] flex-col"><div className="mb-[2px] h-[10px] bg-linear-to-b from-[#ff8000] to-[#ff3000]" /><div className="h-[18px] bg-[#2b7a58]" /><div className="flex-1 bg-linear-to-b from-[#3ff0b4] to-[#48c9cf]" /></div>
            <div className="flex h-[127px] w-[6px] flex-col"><div className="mb-[2px] -ml-[2px] h-[10px] bg-linear-to-b from-[#ff8000] to-[#ff3000]" /><div className="h-[13px] bg-[#2b7a58]" /><div className="mb-px h-[4px] bg-[#3ff0b4]" /><div className="flex-1 bg-linear-to-b from-[#3ff0b4] to-[#48c9cf]" /></div>
          </>}
        />
        <Strip
          top="bg-[#482b37]" panel="bg-[#ce95b7]" lower="bg-[#b088a3]" lowerH="h-[76px]" foot="bg-[#eda3cd]" number="3" fx phase arm="a"
          slots={<Slot>ReaComp</Slot>}
          meter={<>
            <div className="flex h-[115px] w-[5px] flex-col"><div className="h-[19px] bg-[#2a2a2a]" /><div className="flex-1 bg-[#00d2a8]" /></div>
            <div className="flex h-[115px] w-[5px] flex-col"><div className="h-[13px] bg-[#2a2a2a]" /><div className="mb-[2px] h-[4px] bg-[#00d2a8]" /><div className="flex-1 bg-[#00d2a8]" /></div>
          </>}
        />
      </div>
    </section>
  );
}

export default function App() {
  return (
    <div className="relative flex h-screen w-full overflow-hidden bg-[#333] font-['Liberation_Sans',Arial,sans-serif] leading-none">
      <TrackList />
      <Arrange />
      <div className="absolute top-[426px] right-0 bottom-0 left-[1315px] border-r border-[#777] bg-[#d1d3d2]" />
      <ReaCompWindow />
      <FxWindow />
      <MixerWindow />
    </div>
  );
}
